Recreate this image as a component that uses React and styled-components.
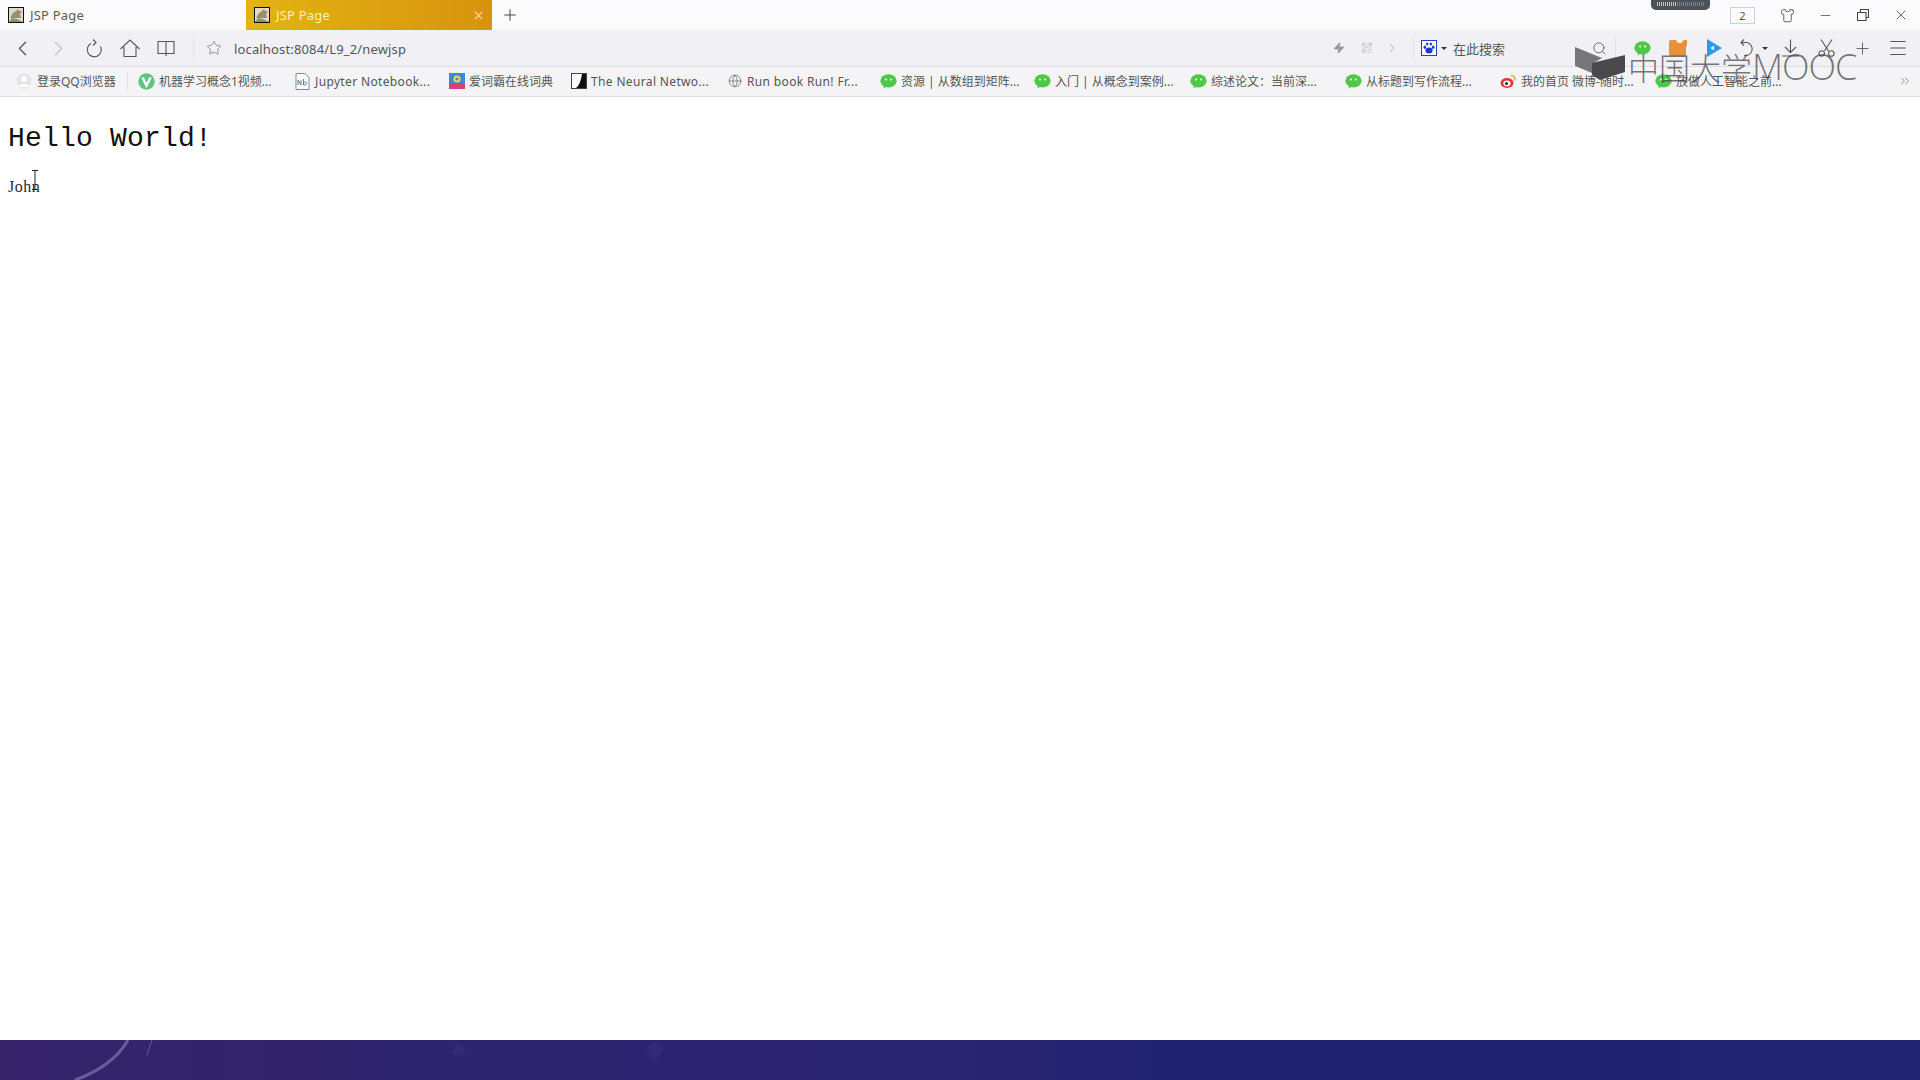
import React from "react";
import styled, { createGlobalStyle } from "styled-components";
import { ChevronLeft, ChevronRight, Star, Search, Plus, Menu, Minus, X, Shirt, Zap, QrCode, ChevronsRight, Globe } from "lucide-react";

const Global = createGlobalStyle`
  html, body { margin: 0; padding: 0; background: #fff; overflow: hidden; }
  #root { width: 1920px; height: 1080px; }
`;

const UI = `"Noto Sans", "Noto Sans CJK SC", sans-serif`;

const Shell = styled.div`
  position: relative;
  width: 1920px;
  height: 1080px;
  display: flex;
  flex-direction: column;
  overflow: hidden;
  font-family: ${UI};
`;
const TabBar = styled.div`
  height: 30px;
  display: flex;
  align-items: stretch;
  background: #fbfbfd;
`;
const Tab = styled.div`
  width: 246px;
  display: flex;
  align-items: center;
  gap: 6px;
  padding: 0 8px;
  box-sizing: border-box;
  font-size: 13px;
  letter-spacing: 0.2px;
  color: ${(p) => (p.$active ? "#fbeec0" : "#5a5a5e")};
  background: ${(p) => (p.$active ? "linear-gradient(90deg,#e2b412,#d8930f)" : "transparent")};
`;
const TabTitle = styled.span`
  flex: 1;
`;
const TabClose = styled.span`
  display: flex;
  color: #f6d9a0;
  margin-right: -1px;
`;
const NewTab = styled.div`
  width: 36px;
  display: flex;
  align-items: center;
  justify-content: center;
  color: #444;
`;
const WindowControls = styled.div`
  margin-left: auto;
  display: flex;
  align-items: center;
  color: #444;
`;
const Badge = styled.div`
  width: 23px;
  height: 15px;
  border: 1px solid #cfcfd3;
  font-size: 11px;
  color: #555;
  display: flex;
  align-items: center;
  justify-content: center;
  margin-right: 13px;
`;
const WinButton = styled.div`
  width: 38px;
  display: flex;
  align-items: center;
  justify-content: center;
`;
const Meter = styled.div`
  position: absolute;
  left: 1651px;
  top: 0;
  width: 59px;
  height: 10px;
  background: #4c5258;
  border-radius: 0 0 5px 5px;
  display: flex;
  align-items: flex-start;
  padding: 2px 6px 0;
  box-sizing: border-box;
`;
const MeterFill = styled.div`
  width: 20px;
  height: 4px;
  background: repeating-linear-gradient(90deg,#9fd8c0 0 1px,transparent 1px 2px);
`;
const MeterRest = styled.div`
  flex: 1;
  height: 4px;
  background: repeating-linear-gradient(90deg,#7a8086 0 1px,transparent 1px 2px);
`;
const Toolbar = styled.div`
  height: 36px;
  display: flex;
  align-items: center;
  background: #f1f1f5;
  border-bottom: 1px solid #dcdce0;
  padding: 0 4px;
`;
const Slot = styled.div`
  width: ${(p) => p.$w || 36}px;
  height: 36px;
  flex: none;
  display: flex;
  align-items: center;
  justify-content: center;
  color: ${(p) => p.$color || "#555"};
`;
const Divider = styled.div`
  width: 1px;
  height: ${(p) => p.$h || 20}px;
  background: #e2e2e6;
  flex: none;
`;
const Url = styled.div`
  flex: 1;
  font-size: 13px;
  line-height: 18px;
  padding-top: 1px;
  color: #555;
  letter-spacing: 0.15px;
`;
const SearchText = styled.div`
  width: 82px;
  font-size: 13px;
  color: #555;
  flex: none;
  margin-right: 49px;
`;
const Caret = styled.span`
  width: 0;
  height: 0;
  flex: none;
  border-left: 3px solid transparent;
  border-right: 3px solid transparent;
  border-top: 3px solid #333;
`;
const Bookmarks = styled.div`
  height: 28px;
  padding: 0 0 1px 15px;
  display: flex;
  align-items: center;
  background: #f4f4f6;
  border-bottom: 1px solid #dedee2;
`;
const Bookmark = styled.div`
  width: ${(p) => p.$w}px;
  flex: none;
  display: flex;
  align-items: center;
  gap: ${(p) => p.$gap ?? 4}px;
  font-size: 12px;
  letter-spacing: ${(p) => (p.$latin ? "0.35px" : "0")};
  color: #555;
  white-space: nowrap;
`;
const BookmarkIcon = styled.span`
  width: 17px;
  height: 17px;
  flex: none;
  display: flex;
  align-items: center;
  justify-content: center;
  color: #666;
`;
const BarGap = styled.div`
  width: 10px;
  flex: none;
`;
const More = styled.div`
  margin-left: auto;
  width: 30px;
  display: flex;
  justify-content: center;
  color: #666;
`;
const Page = styled.main`
  flex: 1;
  background: #fff;
  padding: 28px 8px 0;
  color: #111;
`;
const Heading = styled.h1`
  margin: 0;
  font: 400 28px/28px "Liberation Mono", monospace;
  letter-spacing: 0.2px;
`;
const Name = styled.p`
  margin: 25px 0 0;
  font: 400 16px/18px "Liberation Serif", serif;
  letter-spacing: 0.5px;
  color: #2a2a2a;
`;
const TextCursor = styled.svg`
  position: absolute;
  left: 31px;
  top: 170px;
`;
const Footer = styled.footer`
  height: 40px;
  flex: none;
  background: linear-gradient(90deg,#35246a 0%,#2d2470 30%,#2a2472 50%,#1f2270 62%,#1f2370 100%);
`;
const FooterArt = styled.svg`
  display: block;
`;
const Watermark = styled.div`
  position: absolute;
  left: 1575px;
  top: 42px;
  display: flex;
  align-items: center;
  height: 50px;
  gap: 3px;
  pointer-events: none;
`;
const WatermarkText = styled.span`
  font-family: "Noto Sans CJK SC", sans-serif;
  font-size: 31px;
  font-weight: 300;
  color: rgba(60,60,64,0.7);
  line-height: 50px;
`;
const WatermarkLatin = styled.span`
  font-family: "Open Sans", sans-serif;
  font-size: 36px;
  font-weight: 300;
  letter-spacing: -1px;
`;

const Tomcat = () => (
  <svg width="16" height="16" viewBox="0 0 16 16">
    <rect x="0.5" y="0.5" width="15" height="15" fill="#dcdccc" stroke="#111" />
    <path d="M2 11l3-5 3-2 2-2 1 2 3 0-2 3 1 4z" fill="#a08c68" />
    <path d="M1 15l3-4 5 1 6 3z" fill="#7f9a68" />
  </svg>
);
const Wechat = () => (
  <svg width="17" height="15" viewBox="0 0 17 15">
    <ellipse cx="8.5" cy="6.8" rx="8.2" ry="6.6" fill="#4fc84a" />
    <path d="M4 11l-.5 3.500 4-2.500z" fill="#4fc84a" />
    <circle cx="6" cy="5.500" r="1" fill="#fff" />
    <circle cx="11" cy="5.500" r="1" fill="#fff" />
  </svg>
);
const Person = () => (
  <svg width="16" height="16" viewBox="0 0 16 16">
    <circle cx="8" cy="8" r="7.5" fill="#e4e4e8" />
    <circle cx="8" cy="6" r="3" fill="#fff" />
    <path d="M3 14c1-4 9-4 10 0z" fill="#fff" />
  </svg>
);
const Vee = () => (
  <svg width="17" height="17" viewBox="0 0 17 17">
    <circle cx="8.5" cy="8.5" r="8.2" fill="#62c283" />
    <path d="M4.5 4.5l4 8 4-8" fill="none" stroke="#fff" strokeWidth="2.4" />
  </svg>
);
const Notebook = () => (
  <svg width="15" height="17" viewBox="0 0 15 17">
    <path d="M1 .5h9l4 4v12H1z" fill="#fff" stroke="#7c8aa6" />
    <path d="M3 12V7l3 5V7M8.5 6v6h2a1.6 1.6 0 000-3h-2" fill="none" stroke="#6a7a98" />
  </svg>
);
const Ciba = () => (
  <svg width="16" height="16" viewBox="0 0 16 16">
    <rect width="16" height="16" fill="#2d8fe0" />
    <rect y="10" width="16" height="6" fill="#d8407a" />
    <circle cx="8" cy="6" r="3.5" fill="#fbd94a" />
    <circle cx="8" cy="6" r="1.6" fill="#2d8fe0" />
  </svg>
);
const Neural = () => (
  <svg width="16" height="16" viewBox="0 0 16 16">
    <rect x="0.5" y="0.5" width="15" height="15" fill="#fff" stroke="#444" />
    <path d="M5 15C9 12 10 6 11 1h4v14z" fill="#111" />
  </svg>
);
const Weibo = () => (
  <svg width="17" height="16" viewBox="0 0 17 16">
    <ellipse cx="7" cy="10" rx="6.5" ry="5" fill="#d9383a" />
    <ellipse cx="7" cy="10.4" rx="3.6" ry="2.8" fill="#fff" />
    <circle cx="6.5" cy="10.5" r="1.5" fill="#222" />
    <path d="M11 2.5c3 0 4.5 2 4 5" fill="none" stroke="#f0a030" strokeWidth="1.4" />
  </svg>
);
const Paw = () => (
  <svg width="16" height="16" viewBox="0 0 16 16">
    <rect x="0.5" y="0.5" width="15" height="15" fill="#fff" stroke="#2540c0" />
    <g fill="#1c34d0">
      <ellipse cx="8" cy="10.6" rx="3.6" ry="3" />
      <ellipse cx="3.8" cy="7.2" rx="1.3" ry="1.7" />
      <ellipse cx="12.2" cy="7.2" rx="1.3" ry="1.7" />
      <ellipse cx="6.2" cy="4" rx="1.2" ry="1.6" />
      <ellipse cx="9.8" cy="4" rx="1.2" ry="1.6" />
    </g>
  </svg>
);
const Camera = () => (
  <svg width="19" height="16" viewBox="0 0 19 16">
    <path d="M0 2a2 2 0 012-2h5l2 3h3l3-3h3v5l-1 2v9H2a2 2 0 01-2-2z" fill="#e8913a" />
  </svg>
);
const BluePlay = () => (
  <svg width="16" height="18" viewBox="0 0 16 18">
    <path d="M1 0l15 9-15 9z" fill="#2f9be8" />
    <path d="M8 6.5v5l-3.5-2.5z" fill="#fff" />
  </svg>
);
const Line = ({ w, h, d }) => (
  <svg width={w} height={h} viewBox={`0 0 ${w} ${h}`} fill="none" stroke="currentColor" strokeWidth="1.1">
    <path d={d} />
  </svg>
);
const LogoBook = () => (
  <svg width="50" height="46" viewBox="0 0 50 46">
    <path d="M0 3l27 11-10 6v9l-17-7z" fill="#777779" />
    <path d="M17 19l33-8v17l-25 8-8-5z" fill="#4a4a4c" />
  </svg>
);

const bookmarks = [
  { w: 156, icon: <Vee />, text: "机器学习概念1视频..." },
  { w: 154, icon: <Notebook />, text: "Jupyter Notebook...", latin: true },
  { w: 122, icon: <Ciba />, text: "爱词霸在线词典" },
  { w: 156, icon: <Neural />, text: "The Neural Netwo...", latin: true },
  { w: 154, icon: <Globe size={14} strokeWidth={1.2} />, text: "Run book Run! Fr...", latin: true },
  { w: 154, icon: <Wechat />, text: "资源 | 从数组到矩阵..." },
  { w: 156, icon: <Wechat />, text: "入门 | 从概念到案例..." },
  { w: 155, icon: <Wechat />, text: "综述论文：当前深..." },
  { w: 155, icon: <Wechat />, text: "从标题到写作流程..." },
  { w: 155, icon: <Weibo />, text: "我的首页 微博-随时..." },
  { w: 150, icon: <Wechat />, text: "放做人工智能之前..." },
];

export default function App() {
  return (
    <Shell>
      <Global />
      <TabBar>
        <Tab>
          <Tomcat />
          <TabTitle>JSP Page</TabTitle>
        </Tab>
        <Tab $active>
          <Tomcat />
          <TabTitle>JSP Page</TabTitle>
          <TabClose><X size={13} /></TabClose>
        </Tab>
        <NewTab><Plus size={18} strokeWidth={1.3} /></NewTab>
        <WindowControls>
          <Badge>2</Badge>
          <WinButton><Shirt size={15} strokeWidth={1.3} /></WinButton>
          <WinButton><Minus size={15} strokeWidth={1.2} /></WinButton>
          <WinButton><Line w={12} h={12} d="M3.5 3V.5h8v8H9M.5 3.5h8.500v8h-8.500z" /></WinButton>
          <WinButton><X size={16} strokeWidth={1.2} /></WinButton>
        </WindowControls>
      </TabBar>
      <Meter><MeterFill /><MeterRest /></Meter>
      <Toolbar>
        <Slot><ChevronLeft size={25} strokeWidth={1.2} /></Slot>
        <Slot $color="#c4c4c8"><ChevronRight size={25} strokeWidth={1.2} /></Slot>
        <Slot><Line w={18} h={19} d="M6 4.500a7 7 0 1 0 9.500 3M8 .5l3 3-3 3" /></Slot>
        <Slot><Line w={20} h={18} d="M.5 10L10 1l9.500 9M4 8v9.500h12V8" /></Slot>
        <Slot><Line w={18} h={17} d="M1 1.500h16v12H1zM9 1.500V16" /></Slot>
        <Slot $w={9} />
        <Divider />
        <Slot $w={40} $color="#777"><Star size={16} strokeWidth={1.1} /></Slot>
        <Url>localhost:8084/L9_2/newjsp</Url>
        <Slot $w={28} $color="#999"><Zap size={12} fill="#999" /></Slot>
        <Slot $w={28} $color="#aaa"><QrCode size={12} strokeWidth={1.2} /></Slot>
        <Slot $w={22} $color="#999"><ChevronRight size={14} strokeWidth={1.3} /></Slot>
        <Slot $w={10} />
        <Divider />
        <Slot $w={3} />
        <Slot $w={24}><Paw /></Slot>
        <Caret />
        <Slot $w={6} />
        <SearchText>在此搜索</SearchText>
        <Slot $w={30}><Search size={15} strokeWidth={1.3} /></Slot>
        <Slot $w={1} />
        <Divider />
        <Slot $w={8} />
        <Slot><Wechat /></Slot>
        <Slot><Camera /></Slot>
        <Slot><BluePlay /></Slot>
        <Slot $w={30}><Line w={16} h={18} d="M5 .5L2 3.500l3 3M2 3.500h6a6.500 6.500 0 1 1-3 13" /></Slot>
        <Caret />
        <Slot $w={4} />
        <Slot><Line w={17} h={18} d="M8.500 .5v13M3 8l5.500 5.500L14 8M0 17h17" /></Slot>
        <Slot><Line w={17} h={18} d="M3 .5l7.500 11.500M14 .5L6.500 12M6.500 14.500a2.800 2.800 0 1 1-5.600 0a2.800 2.800 0 1 1 5.600 0M16.100 14.500a2.800 2.800 0 1 1-5.600 0a2.800 2.800 0 1 1 5.600 0" /></Slot>
        <Slot><Plus size={19} strokeWidth={1.1} /></Slot>
        <Slot><Menu size={22} strokeWidth={1.1} /></Slot>
      </Toolbar>
      <Bookmarks>
        <Bookmark $w={112} $gap={5}>
          <BookmarkIcon><Person /></BookmarkIcon>
          登录QQ浏览器
        </Bookmark>
        <Divider $h={18} />
        <BarGap />
        {bookmarks.map((b) => (
          <Bookmark key={b.text} $w={b.w} $latin={b.latin}>
            <BookmarkIcon>{b.icon}</BookmarkIcon>
            {b.text}
          </Bookmark>
        ))}
        <More><ChevronsRight size={14} strokeWidth={1.2} /></More>
      </Bookmarks>
      <Page>
        <Heading>Hello World!</Heading>
        <Name>John</Name>
      </Page>
      <Footer>
        <FooterArt width="1920" height="40" viewBox="0 0 1920 40">
          <path d="M128 0C118 18 98 32 75 40" fill="none" stroke="#6a5a9e" strokeWidth="3" />
          <path d="M152 0L147 15" stroke="#6a5a9e" strokeWidth="1" />
          <circle cx="655" cy="10" r="8" fill="#3d3a85" opacity="0.35" />
          <circle cx="459" cy="10" r="6" fill="#3d3a85" opacity="0.3" />
        </FooterArt>
      </Footer>
      <TextCursor width="8" height="20" viewBox="0 0 8 20">
        <path d="M1 .5h6M4 .5v19M1 19.5h6" stroke="#222" fill="none" />
      </TextCursor>
      <Watermark>
        <LogoBook />
        <WatermarkText>中国大学<WatermarkLatin>MOOC</WatermarkLatin></WatermarkText>
      </Watermark>
    </Shell>
  );
}
